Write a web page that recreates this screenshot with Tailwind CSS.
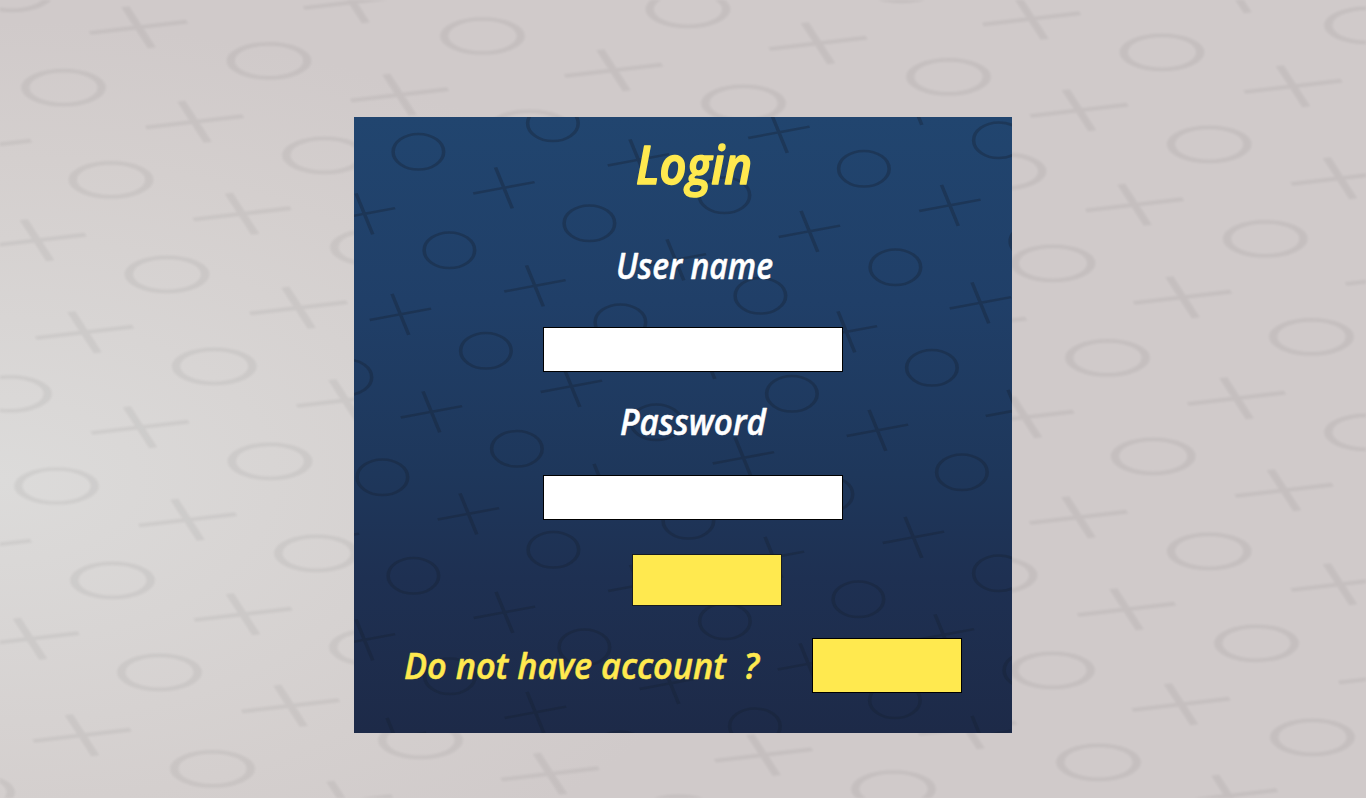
<!DOCTYPE html>
<html lang="en">
<head>
<meta charset="utf-8">
<title>Login</title>
<script src="https://cdn.jsdelivr.net/npm/@tailwindcss/browser@4"></script>
</head>
<body class="w-screen h-screen overflow-hidden bg-[#d0caca]">
<div class="relative isolate w-[1366px] h-[798px] overflow-hidden bg-[radial-gradient(ellipse_780px_460px_at_0px_480px,#dcdbda_0%,#d8d5d4_35%,#d4cfce_70%,#d0caca_100%)]">
  <svg id="page-pattern" class="absolute inset-0 -z-10 blur-[0.8px]" width="1366" height="798" viewBox="-0.5 -0.3 1366 798" fill="none" stroke="#000" stroke-opacity="0.052" stroke-width="3.7"></svg>
  <main class="relative isolate mt-[117px] ml-[354px] w-[658px] h-[616px] overflow-hidden bg-[linear-gradient(180deg,#21456f_0%,#203f68_30%,#1e375b_58%,#1e3052_75%,#1d2a48_100%)]">
    <svg id="panel-pattern" class="absolute inset-0 -z-10 blur-[0.6px]" width="658" height="616" viewBox="353.6 116.7 658 616" fill="none" stroke="#172233" stroke-opacity="0.36" stroke-width="2.5"></svg>
    <form class="flex flex-col h-full font-['Open_Sans',sans-serif] italic font-semibold">
      <h1 class="ml-[281px] mt-5 h-[84px]">
        <svg class="overflow-visible" width="120" height="70"><text x="1" y="47" font-size="53" fill="#ffe94f" stroke="#ffe94f" stroke-width="1.6" stroke-linejoin="round" textLength="116" lengthAdjust="spacingAndGlyphs">Login</text></svg>
      </h1>
      <label for="user" class="ml-[262px] mt-6 h-[82px]">
        <svg class="overflow-visible" width="160" height="40"><text x="0" y="34" font-size="36" fill="#fff" stroke="#fff" stroke-width="0.5" stroke-linejoin="round" textLength="157" lengthAdjust="spacingAndGlyphs">User name</text></svg>
      </label>
      <input id="user" type="text" class="ml-[189px] w-[300px] h-[45px] shrink-0 bg-white border border-black">
      <label for="pass" class="ml-[266px] mt-6 h-[79px]">
        <svg class="overflow-visible" width="150" height="40"><text x="0" y="39" font-size="36" fill="#fff" stroke="#fff" stroke-width="0.5" stroke-linejoin="round" textLength="146" lengthAdjust="spacingAndGlyphs">Password</text></svg>
      </label>
      <input id="pass" type="password" class="ml-[189px] w-[300px] h-[45px] shrink-0 bg-white border border-black">
      <button type="button" aria-label="Login" class="ml-[278px] mt-[34px] w-[150px] h-[52px] shrink-0 bg-[#ffe94f] border border-[#171c20]"></button>
      <div class="flex ml-[50px] mt-8 h-[55px]">
        <svg class="overflow-visible shrink-0" width="408" height="55"><text x="0" y="41" font-size="36" fill="#ffe94f" stroke="#ffe94f" stroke-width="0.5" stroke-linejoin="round" textLength="355" lengthAdjust="spacingAndGlyphs" class="whitespace-pre">Do not have account  ?</text></svg>
        <button type="button" aria-label="Register" class="w-[150px] h-[55px] bg-[#ffe94f] border border-black"></button>
      </div>
    </form>
  </main>
</div>
<script>
// Noughts and crosses: lists of centre points, drawn stretched horizontally.
function draw(id, stretch, r, os, xs) {
  const at = p => `<g transform="translate(${p[0]} ${p[1]}) scale(${stretch} 1)">`;
  document.getElementById(id).innerHTML =
    os.map(p => at(p) + `<circle r="${r}"/></g>`).join('') +
    xs.map(p => at(p) + `<path d="M-21.6 5.7L-.4 .1M.4-.1L21.6-5.7M-5.9-20.5L5.9 20.5"/></g>`).join('');
}
draw('page-pattern', 2.25, 17,
  [[11,-7],[63,87.3],[268.5,60.5],[110.5,179.5],[324,155],[166.5,274],[372,247],[213.7,366],[9,393.5],[56,485.7],[269.5,461],[112,580],[316,553],[159,672],[371,647],[212,768.5],[-28,792],[482,35.7],[687.4,9],[743,103],[948,76.5],[529,128],[901,-16],[1161.5,52],[1366,25],[1208.7,144],[1003.5,171],[1052.5,263],[1264.8,238.5],[1107,357.5],[1311,336.5],[1152.7,456],[1366,432],[1208.7,551],[994.5,575],[1052,670],[1256,643],[1098,762],[1312,737],[420,740],[893,788.7],[678,813]],
  [[138,27],[194,121.5],[36.5,240],[-18,146],[241.5,213.5],[84,332],[298,307.5],[352,2],[399,94.5],[613,70],[817.5,43],[1031,18.5],[139.5,427],[187,519.5],[345,400],[29.5,638.5],[242.5,614],[81.5,735],[290,705.5],[-18,546],[343,801.5],[1078.5,110],[1292.5,86],[1234,-8],[1134,204.5],[1339.5,178],[1182,297],[1394,278],[977,324],[1236,398],[1024.5,417],[1078,517],[1283.5,490],[1339.5,584],[1126,609],[1180.5,704],[1387,676.5],[1228,795.5],[549.5,773.5],[763,754.7],[967,728]]);
draw('panel-pattern', 1.42, 17.8,
  [[418,151.5],[552.5,123],[449,250],[589,223],[485.5,350.5],[620,322],[346,377],[656,422],[724,195],[863.5,168.5],[998.5,140],[760,295.5],[895,267],[931.5,367.5],[791.5,393.5],[1035,241],[516.5,448.5],[382,477],[553,549.5],[413,575.5],[584,647],[449.5,676],[688,520.5],[620,749],[961.5,472],[827,494],[998.5,573],[858,599],[724.5,621],[894.5,700],[754.5,726],[1029,670]],
  [[503.5,187.5],[638,159.5],[364,213.5],[534.5,285.5],[400,314],[571,386],[431,411.5],[675,259.5],[778.5,132],[913,104],[949.5,205],[809,231],[846,331.5],[980,302.5],[706,358],[1016,410],[743,457.5],[877,430],[913,537],[773,557],[943,634.5],[808,663.5],[980,736],[468,513.5],[602,484],[504,612],[364,639.5],[535,712],[328,539],[638.5,585],[670,683],[395,738]]);
</script>
</body>
</html>
